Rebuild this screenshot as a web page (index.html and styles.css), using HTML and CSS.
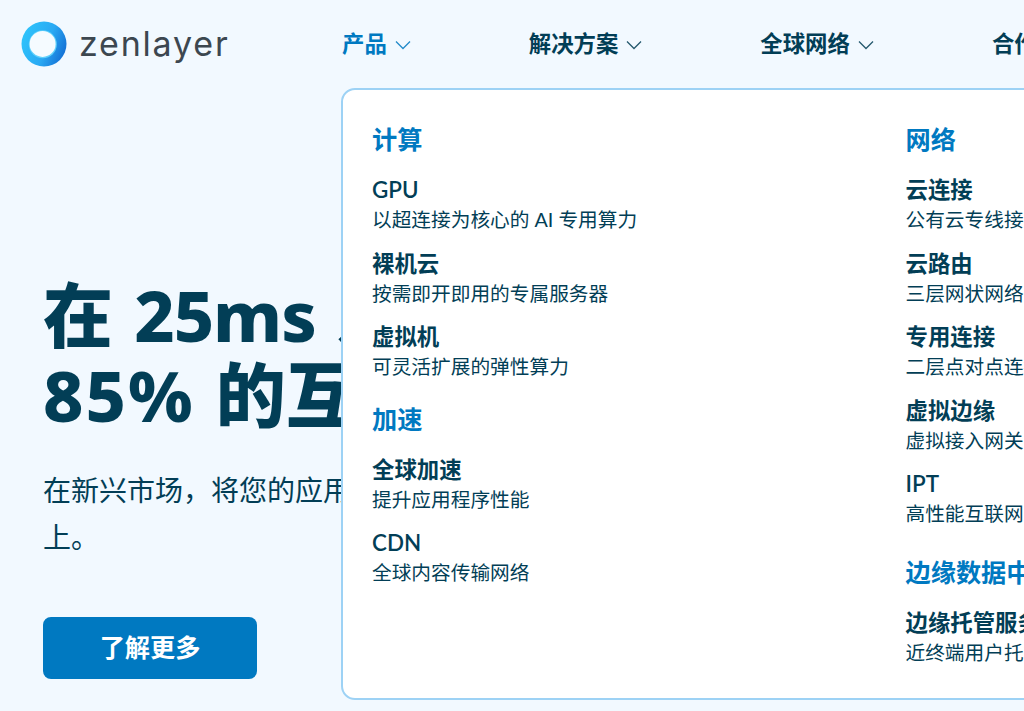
FILE: index.html
```html
<!DOCTYPE html>
<html lang="zh-CN">
<head>
<meta charset="utf-8">
<title>Zenlayer</title>
<link rel="stylesheet" href="styles.css">
</head>
<body>
<div class="page">
  <header class="header">
    <a class="logo" href="#">
      <svg class="logo-mark" viewBox="0 0 46 46" width="46" height="46">
        <defs>
          <linearGradient id="ring" x1="0" y1="0.2" x2="1" y2="0.6">
            <stop offset="0" stop-color="#2ec6fc"/>
            <stop offset="0.6" stop-color="#2aa9f3"/>
            <stop offset="1" stop-color="#1472d6"/>
          </linearGradient>
        </defs>
        <circle cx="23" cy="23" r="22.5" fill="url(#ring)"/>
        <circle cx="21.8" cy="23.3" r="14" fill="#5fd0fb"/>
        <circle cx="21.6" cy="22.9" r="13" fill="#f5fbff"/>
      </svg>
      <span class="logo-text">zenlayer</span>
    </a>
    <nav class="nav">
      <a class="nav-item active" href="#">产品<svg class="chev" viewBox="0 0 16 10" width="16" height="10"><path d="M1 1.5 8 8.5 15 1.5" fill="none" stroke="currentColor" stroke-width="1.3"/></svg></a>
      <a class="nav-item" href="#">解决方案<svg class="chev" viewBox="0 0 16 10" width="16" height="10"><path d="M1 1.5 8 8.5 15 1.5" fill="none" stroke="currentColor" stroke-width="1.3"/></svg></a>
      <a class="nav-item" href="#">全球网络<svg class="chev" viewBox="0 0 16 10" width="16" height="10"><path d="M1 1.5 8 8.5 15 1.5" fill="none" stroke="currentColor" stroke-width="1.3"/></svg></a>
      <a class="nav-item" href="#">合作伙伴<svg class="chev" viewBox="0 0 16 10" width="16" height="10"><path d="M1 1.5 8 8.5 15 1.5" fill="none" stroke="currentColor" stroke-width="1.3"/></svg></a>
    </nav>
  </header>

  <section class="hero">
    <h1 class="hero-title">在 <span class="lat-tight">25ms</span> 及时连接<br><span class="lat-wide">85%</span> 的互联网用户</h1>
    <p class="hero-text">在新兴市场，将您的应用部署到离用户更近的边缘节点<br>上。</p>
    <a class="btn" href="#">了解更多</a>
  </section>

  <div class="menu">
    <div class="menu-col col-left">
      <div class="menu-group">
        <h3 class="menu-head">计算</h3>
        <a class="menu-item"><b>GPU</b><span>以超连接为核心的 AI 专用算力</span></a>
        <a class="menu-item"><b>裸机云</b><span>按需即开即用的专属服务器</span></a>
        <a class="menu-item"><b>虚拟机</b><span>可灵活扩展的弹性算力</span></a>
      </div>
      <div class="menu-group">
        <h3 class="menu-head">加速</h3>
        <a class="menu-item"><b>全球加速</b><span>提升应用程序性能</span></a>
        <a class="menu-item"><b>CDN</b><span>全球内容传输网络</span></a>
      </div>
    </div>
    <div class="menu-col col-right">
      <div class="menu-group">
        <h3 class="menu-head">网络</h3>
        <a class="menu-item"><b>云连接</b><span>公有云专线接入</span></a>
        <a class="menu-item"><b>云路由</b><span>三层网状网络</span></a>
        <a class="menu-item"><b>专用连接</b><span>二层点对点连接</span></a>
        <a class="menu-item"><b>虚拟边缘</b><span>虚拟接入网关</span></a>
        <a class="menu-item"><b>IPT</b><span>高性能互联网</span></a>
      </div>
      <div class="menu-group">
        <h3 class="menu-head">边缘数据中心</h3>
        <a class="menu-item"><b>边缘托管服务</b><span>近终端用户托管</span></a>
      </div>
    </div>
  </div>
</div>
</body>
</html>
```
FILE: styles.css
```css
* { box-sizing: border-box; }
html, body { margin: 0; padding: 0; height: 100%; overflow: hidden; }
body {
  background: #f2f9ff;
  color: #023e56;
  font-family: "Lato", "Noto Sans CJK SC", sans-serif;
}
a { color: inherit; text-decoration: none; }
.page { position: relative; width: 1024px; height: 711px; overflow: hidden; }

.header { display: flex; align-items: center; height: 88px; padding-left: 21px; }
.logo { display: flex; align-items: center; gap: 12px; width: 321px; flex: none; }
.logo-mark { flex: none; }
.logo-text {
  font-family: "Inter", sans-serif;
  font-size: 34px;
  letter-spacing: 1.8px;
  color: #3c4750;
  line-height: 46px;
}
.nav { display: flex; gap: 118px; flex: none; white-space: nowrap; }
.nav-item {
  display: flex;
  align-items: center;
  gap: 8px;
  font-size: 22.4px;
  font-weight: 600;
  line-height: 32px;
}
.nav-item.active { color: #0079c1; }
.chev { flex: none; margin-top: 2px; opacity: .85; }

.hero { padding: 187px 0 0 43px; width: 1024px; }
.hero-title {
  margin: 0;
  font-family: "Noto Sans", "Noto Sans CJK SC", sans-serif;
  font-size: 70px;
  line-height: 80px;
  font-weight: 800;
  word-spacing: 3px;
  white-space: nowrap;
}
.lat-tight { letter-spacing: -1px; }
.lat-wide { letter-spacing: 2px; }
.hero-text {
  margin: 32px 0 0;
  font-size: 28px;
  line-height: 47px;
  white-space: nowrap;
}
.btn {
  display: flex;
  align-items: center;
  justify-content: center;
  margin-top: 56px;
  padding-bottom: 5px;
  width: 214px;
  height: 62px;
  background: #0079c1;
  border-radius: 8px;
  color: #fff;
  font-size: 25.2px;
  font-weight: 600;
}

.menu {
  position: absolute;
  left: 341px;
  top: 88px;
  width: 900px;
  height: 612px;
  background: #fff;
  border: 2px solid #9dd2f5;
  border-radius: 14px;
  display: flex;
  padding: 30px 0 0 29px;
}
.menu-col { flex: none; display: flex; flex-direction: column; }
.col-left { width: 533.5px; gap: 4px; }
.col-right { width: 300px; gap: 10px; }
.menu-head {
  margin: 0 0 17px;
  font-size: 25.2px;
  line-height: 38px;
  font-weight: 600;
  color: #0079c1;
}
.menu-item { display: block; margin-bottom: 13.6px; white-space: nowrap; }
.menu-item b { display: block; font-size: 22.4px; line-height: 30px; font-weight: 600; }
.menu-item span { display: block; font-size: 19.7px; line-height: 30px; }
```
